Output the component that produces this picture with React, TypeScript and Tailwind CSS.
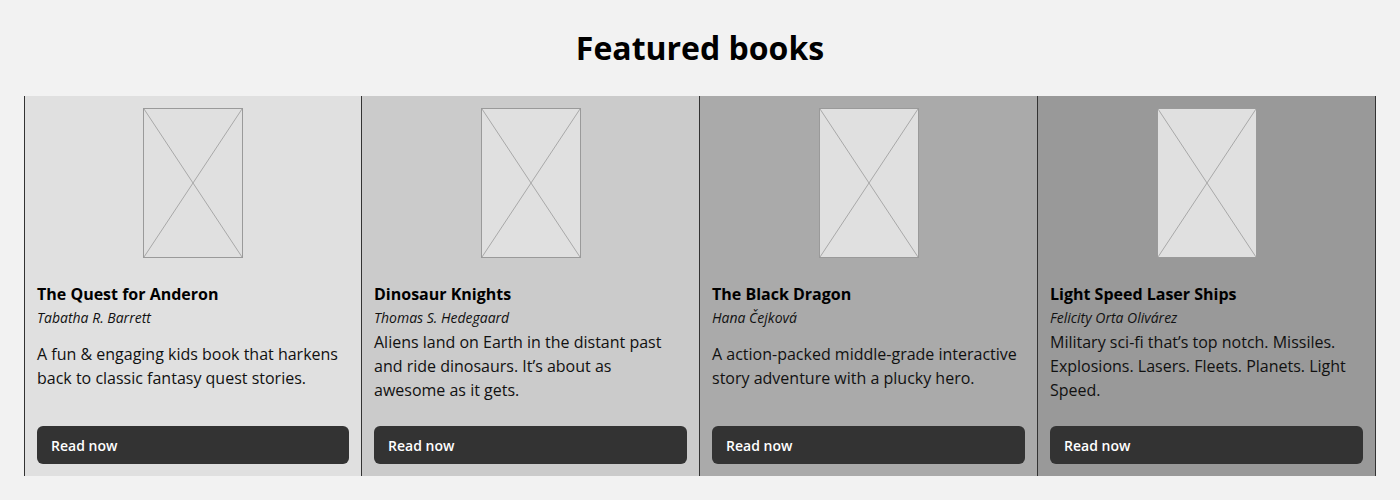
import React from 'react'

interface Book {
  title: string
  author: string
  blurb: string
  bg: string
}

const books: Book[] = [
  {
    title: 'The Quest for Anderon',
    author: 'Tabatha R. Barrett',
    blurb: 'A fun & engaging kids book that harkens back to classic fantasy quest stories.',
    bg: 'bg-[#e0e0e0]',
  },
  {
    title: 'Dinosaur Knights',
    author: 'Thomas S. Hedegaard',
    blurb: 'Aliens land on Earth in the distant past and ride dinosaurs. It\u2019s about as awesome as it gets.',
    bg: 'bg-[#cbcbcb]',
  },
  {
    title: 'The Black Dragon',
    author: 'Hana \u010cejkov\u00e1',
    blurb: 'A action-packed middle-grade interactive story adventure with a plucky hero.',
    bg: 'bg-[#aaaaaa]',
  },
  {
    title: 'Light Speed Laser Ships',
    author: 'Felicity Orta Oliv\u00e1rez',
    blurb: 'Military sci-fi that\u2019s top notch. Missiles. Explosions. Lasers. Fleets. Planets. Light Speed.',
    bg: 'bg-[#999999]',
  },
]

function CoverPlaceholder() {
  // empty image box with a cross, like a wireframe
  return (
    <div className="mx-auto h-[150px] w-[100px] border border-[#9a9a9a] bg-[#e0e0e0]">
      <svg viewBox="0 0 98 148" preserveAspectRatio="none" className="block h-full w-full">
        <line x1="0" y1="0" x2="98" y2="148" stroke="#a8a8a8" strokeWidth="1" />
        <line x1="98" y1="0" x2="0" y2="148" stroke="#a8a8a8" strokeWidth="1" />
      </svg>
    </div>
  )
}

function BookCard({ book, last }: { book: Book; last: boolean }) {
  return (
    <div className={`flex flex-col border-l border-[#333] p-3 ${book.bg} ${last ? 'border-r' : ''}`}>
      <CoverPlaceholder />
      <h2 className="mt-6 text-base font-bold leading-6 text-black">{book.title}</h2>
      <p className="pt-px text-sm italic leading-[22px] text-[#111]">{book.author}</p>
      <div className="flex h-[74px] items-center pr-[6px]">
        <p className="text-base leading-6 text-[#111]">{book.blurb}</p>
      </div>
      <button className="mt-[23px] h-[38px] w-full rounded-md bg-[#333] px-[14px] pt-px text-left text-sm font-semibold text-white">
        Read now
      </button>
    </div>
  )
}

export default function App() {
  return (
    <div className="min-h-[500px] bg-[#f2f2f2]" style={{ fontFamily: '"Open Sans", "Liberation Sans", sans-serif' }}>
      <h1 className="pt-6 text-center text-[32px] font-bold leading-[48px] text-black">Featured books</h1>
      <div className="mt-6 grid grid-cols-[337px_338px_338px_339px] px-6">
        {books.map((b, i) => (
          <BookCard key={b.title} book={b} last={i === books.length - 1} />
        ))}
      </div>
    </div>
  )
}
